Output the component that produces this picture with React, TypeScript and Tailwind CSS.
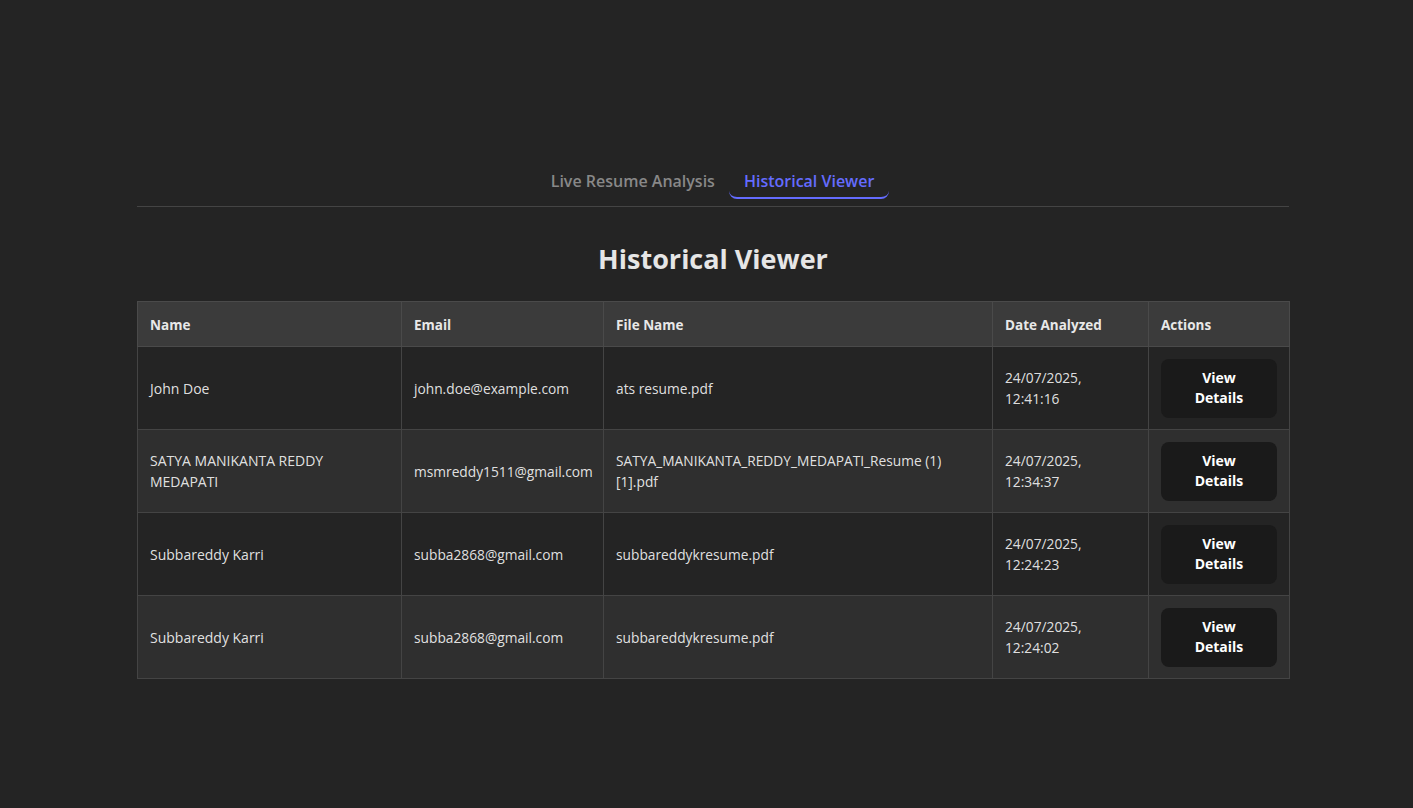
import React from "react";

const rows = [
  { name: "John Doe", email: "john.doe@example.com", file: "ats resume.pdf", date: "24/07/2025,", time: "12:41:16" },
  { name: "SATYA MANIKANTA REDDY MEDAPATI", email: "msmreddy1511@gmail.com", file: "SATYA_MANIKANTA_REDDY_MEDAPATI_Resume (1) [1].pdf", date: "24/07/2025,", time: "12:34:37" },
  { name: "Subbareddy Karri", email: "subba2868@gmail.com", file: "subbareddykresume.pdf", date: "24/07/2025,", time: "12:24:23" },
  { name: "Subbareddy Karri", email: "subba2868@gmail.com", file: "subbareddykresume.pdf", date: "24/07/2025,", time: "12:24:02" },
];

export default function App() {
  return (
    <div
      className="min-h-[808px] w-full bg-[#242424] text-[rgba(255,255,255,0.87)]"
      style={{ fontFamily: '"Open Sans", "Noto Sans", sans-serif' }}
    >
      <div className="pl-[137px] pt-[164px]">
        <div className="w-[1152px]">
          <div className="flex justify-center border-b border-[#444] pb-[7px]">
            <button className="px-[14px] pt-[6px] pb-[5px] text-[16px] leading-[22px] font-semibold text-[#888] border-b-2 border-transparent">
              Live Resume Analysis
            </button>
            <button className="px-[15px] pt-[6px] pb-[5px] text-[16px] leading-[22px] font-semibold text-[#646cff] border-b-2 border-[#646cff] rounded-b-lg">
              Historical Viewer
            </button>
          </div>
          <h1 className="mt-[34px] text-center text-[27px] leading-[36px] font-bold text-[#e6e6e6]">
            Historical Viewer
          </h1>
          <table className="mt-[24px] w-[1152px] table-fixed border-collapse border border-[#4a4a4a] text-[13.75px]">
            <colgroup>
              <col className="w-[264px]" />
              <col className="w-[202px]" />
              <col className="w-[389px]" />
              <col className="w-[156px]" />
              <col className="w-[141px]" />
            </colgroup>
            <thead>
              <tr className="bg-[#3b3b3b] h-[45px]">
                {["Name", "Email", "File Name", "Date Analyzed", "Actions"].map((h) => (
                  <th key={h} className="border border-[#4a4a4a] px-[12px] pt-[2px] text-left font-bold text-[13.5px] text-[#e8e8e8]">
                    {h}
                  </th>
                ))}
              </tr>
            </thead>
            <tbody>
              {rows.map((r, i) => (
                <tr key={i} className={i % 2 === 0 ? "bg-[#242424]" : "bg-[#2f2f2f]"}>
                  <td className="border border-[#444] px-[12px] text-[14px] leading-[21px] align-middle">{r.name}</td>
                  <td className="border border-[#444] px-[12px] leading-[21px] align-middle">{r.email}</td>
                  <td className="border border-[#444] px-[12px] leading-[21px] align-middle break-words">{r.file}</td>
                  <td className="border border-[#444] px-[12px] leading-[21px] align-middle">
                    {r.date}
                    <br />
                    {r.time}
                  </td>
                  <td className="border border-[#444] px-[12px] py-[11.5px] align-middle">
                    <button className="w-full rounded-lg bg-[#1a1a1a] px-[20px] py-[9.5px] text-[14px] leading-[20px] font-bold text-white">
                      View Details
                    </button>
                  </td>
                </tr>
              ))}
            </tbody>
          </table>
        </div>
      </div>
    </div>
  );
}
